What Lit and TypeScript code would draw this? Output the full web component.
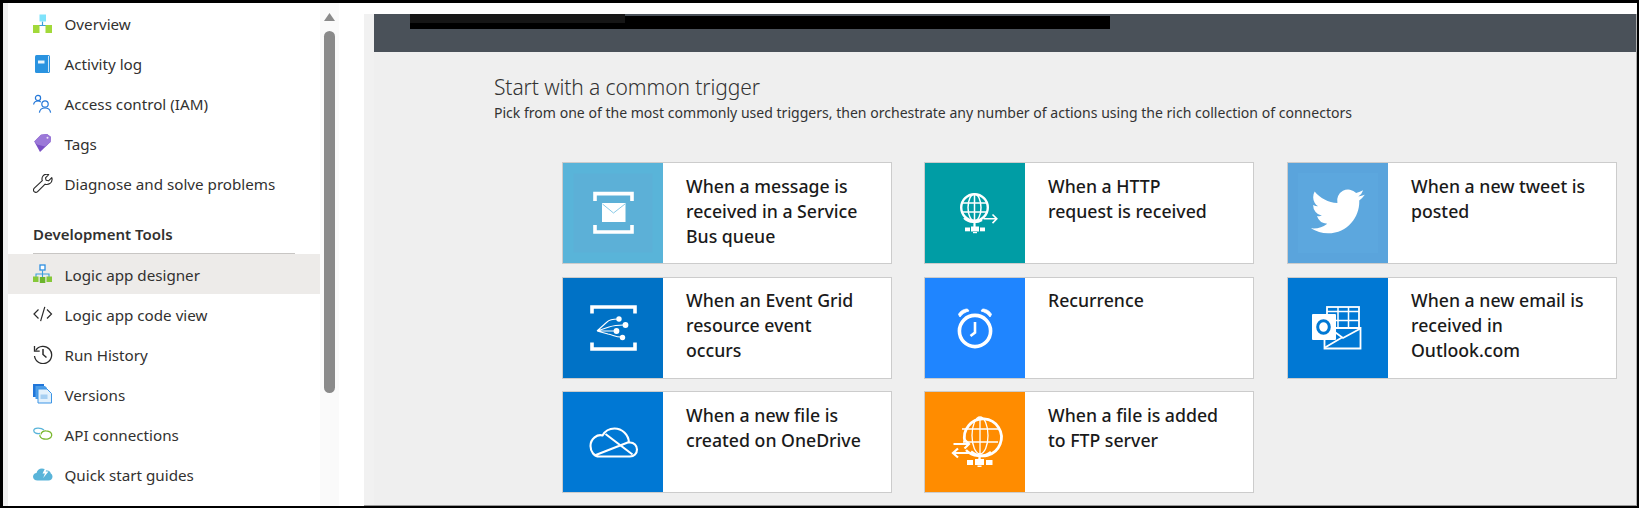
import { LitElement, html, css, svg } from "lit";
import { customElement } from "lit/decorators.js";

const navIcons: Record<string, unknown> = {
  overview: svg`<path d="M9.500 7.500v3.500M3 15v-3.500h13V15" fill="none" stroke="#3b9fdc" stroke-width="1.200"/><rect x="6.500" y="0.500" width="6.500" height="7" fill="#7fe3fb"/><rect x="0" y="11" width="6.500" height="8" fill="#a2d93a"/><rect x="12.500" y="11" width="6.500" height="8" fill="#a2d93a"/>`,
  log: svg`<rect x="2" y="1" width="15" height="18" rx="1.500" fill="#2a93e0"/><rect x="15" y="2" width="1" height="16" fill="#cfe6f8"/><rect x="5" y="6.500" width="6.500" height="3" fill="#e8f4fc"/>`,
  iam: svg`<g fill="none" stroke="#2377d8" stroke-width="1.200"><circle cx="5" cy="4" r="2.600"/><path d="M0.600 10.500C1 8 3 7 5 7c1.200 0 2 .3 2.800.9"/><circle cx="12" cy="10" r="3.200"/><path d="M6.400 18.600C6.800 15.500 9 14 12 14s5.200 1.500 5.600 4.600"/></g>`,
  tags: svg`<path d="M1.300 7.400L8 .8 14 0l4 3-.5 5L7 18z" fill="#7a4fc4"/><path d="M1.300 7.400L8 .8 14 0l4 3-.5 5-5.500 4.500L4 10.500z" fill="#9b78d8"/><circle cx="14.500" cy="3.800" r="1" fill="#eee8f8"/>`,
  wrench: svg`<path d="M18.800 3.600l-3.300 3.200-2.400-.6-.6-2.400 3.200-3.200c-2.300-.8-4.700-.1-5.900 1.700-1 1.500-1 3-.5 4.400L1.300 14.200c-1 1-1 2.500-.1 3.500.9.900 2.400.9 3.400-.1l7.500-7.400c1.500.5 3.200.4 4.700-.6 1.900-1.400 2.700-3.700 2-6z" fill="none" stroke="#2b2b2b" stroke-width="1.150" stroke-linejoin="round"/>`,
  designer: svg`<path d="M9.500 6.500v3.500M3 13v-3h13v3M9.500 10v3" fill="none" stroke="#3b9fdc" stroke-width="1.100"/><rect x="7" y="1" width="5" height="5" fill="#fff" stroke="#2d8fe0" stroke-width="1.300"/><rect x="0" y="12.500" width="5.500" height="5.500" fill="#86c83a"/><rect x="6.800" y="13" width="5.500" height="6" fill="#6cb52d"/><rect x="13.500" y="12.500" width="5.500" height="5.500" fill="#86c83a"/>`,
  code: svg`<path d="M5.500 5.500L1 10l4.500 4.500M14 5.500l4.500 4.500-4.500 4.500M11.800 2.800L7.600 17.200" fill="none" stroke="#2b2b2b" stroke-width="1.200"/>`,
  history: svg`<path d="M2.700 6.500A8.600 8.600 0 1 1 1.500 12" fill="none" stroke="#2b2b2b" stroke-width="1.300"/><path d="M1.500 2v5.200h5.200" fill="none" stroke="#2b2b2b" stroke-width="1.300"/><path d="M10 5v5.500l3.500 3" fill="none" stroke="#2b2b2b" stroke-width="1.500"/>`,
  versions: svg`<path d="M0 0h11v13H0z" fill="#2176d9"/><path d="M2.500 2H12l2 2v11H2.500z" fill="#4c9de8"/><path d="M5 5h9l4.500 4.500V19H5z" fill="#e3f1fc" stroke="#3c95e6"/><rect x="7.500" y="10.500" width="7" height="4.500" fill="#a6cff2"/>`,
  api: svg`<path d="M11 6C8 3.500 1 3.500.8 6.500.6 9 4 10 7 9.500" fill="none" stroke="#59b4d9" stroke-width="1.300"/><path d="M8 10.500C8 8 11 6.600 13 6.800c4 .2 6 2.200 5.700 4.700-.3 3-4.700 4-7.700 3.500-3-.5-4.500-2.500-4-4" fill="none" stroke="#7ab82e" stroke-width="1.300"/>`,
  quick: svg`<path d="M4.500 16.500C2 16.500 0 15 0 12.800s1.800-3.600 3.500-3.700C4 6.500 6.200 4.500 9 4.500c1.800 0 3.500.8 4.500 2 2.500-.3 4.200 1.300 4.300 3 1 .5 1.700 1.800 1.700 3.300 0 2.200-1.800 3.700-4 3.700z" fill="#59b4d9"/><path d="M13 2.500L9.500 9.500H12L10.200 14l5.300-6.500h-2.800l1.800-5z" fill="#fff"/>`,
};

const cardIcons: Record<string, unknown> = {
  bus: svg`<rect x="10.500" y="10.500" width="79" height="79" fill="#5cb0d7"/><path d="M32 38v-7.400h37V38M32 62v7h37v-7" fill="none" stroke="#fff" stroke-width="3.600"/><rect x="39" y="40" width="23.500" height="19" fill="#fff"/><path d="M39.500 41l11 9 11.500-9" fill="none" stroke="#7cc4e3" stroke-width="0.900"/>`,
  grid: svg`<path d="M29 35.500V29h43v6.500M29 64.500V71h43v-6.500" fill="none" stroke="#fff" stroke-width="3.600"/><g fill="none" stroke="#fff" stroke-width="1.100"><path d="M34 53l10-9c2-2 4-3 11-3M34 53l12-4c3-1 6-2 15-2M34 53h18M34 53l11 3c5 1 8 3 13 3"/></g><g fill="#fff"><circle cx="56" cy="41" r="2.700"/><circle cx="62.500" cy="47" r="2.900"/><circle cx="53.500" cy="53" r="2.900"/><circle cx="59.500" cy="59.500" r="2.700"/></g>`,
  onedrive: svg`<g fill="none" stroke="#fff" stroke-width="2.100" stroke-linejoin="round"><path d="M36 64.500h31c4 0 7-3 7-7 0-4-3-7-7-7h-1c-.5-8-7-14-14.500-14-5 0-9.500 2.500-12 7-5-1.500-12 3-12 10.500 0 6 4 10.500 8.500 10.500z"/><path d="M31.500 63.500L66 50M42.500 42l27 20.500"/></g>`,
  http: svg`<g fill="none" stroke="#fff"><circle cx="49.500" cy="44.500" r="13.300" stroke-width="2.400"/><ellipse cx="49.500" cy="44.500" rx="6.500" ry="13.500" stroke-width="1.500"/><path d="M36.500 40h26M36.500 49h26M49.500 31v27" stroke-width="1.500"/><path d="M39 55c5 5 13 5 18 2M49.500 60v5" stroke-width="2.200"/><path d="M58.500 55.800h13M67.500 51.500l4.300 4.300-4.300 4.300" stroke-width="1.600"/></g><g fill="#fff"><rect x="40" y="64.500" width="5" height="3.800"/><rect x="46" y="63.500" width="8" height="5"/><rect x="55" y="64.500" width="5" height="3.800"/><rect x="48" y="69" width="4" height="1.200"/></g>`,
  alarm: svg`<g fill="none" stroke="#fff"><circle cx="50" cy="53" r="15.600" stroke-width="3.600"/><path d="M50 44v10.500l-4.500 3.500" stroke-width="2.600"/></g><path d="M33.500 36.500c1-3 5-5.500 9-5.500l1.500 2c-4 1-7 3-9 6zM66.500 36.500c-1-3-5-5.500-9-5.500l-1.500 2c4 1 7 3 9 6z" fill="#fff" stroke="#fff" stroke-width="0.800"/>`,
  ftp: svg`<g fill="none" stroke="#fff"><path d="M40 50a18.500 18.500 0 1 1 6 9.500" stroke-width="2.800"/><ellipse cx="55" cy="43.500" rx="8" ry="18.500" stroke-width="1.300"/><path d="M37 37h36M38 50h35M55 25v37" stroke-width="1.300"/><path d="M41 58c6 7 18 8 25 2M54.500 64v5" stroke-width="2.400"/><path d="M28.500 52h16M39.500 47.500l4.500 4.500-4.500 4.500M44 61H28M33 56.500L28 61l5 4.500" stroke-width="2.200"/></g><g fill="#fff"><rect x="42" y="68" width="6" height="5"/><rect x="50" y="67" width="9" height="6"/><rect x="61" y="68" width="6.500" height="5"/><rect x="52.500" y="73.500" width="4" height="1.500"/></g>`,
  twitter: svg`<rect x="10" y="10" width="80" height="80" fill="#5ca7de"/><path transform="translate(23 21.500) scale(2.240)" d="M23.953 4.570a10 10 0 0 1-2.825.775 4.958 4.958 0 0 0 2.163-2.723c-.951.555-2.005.959-3.127 1.184a4.920 4.920 0 0 0-8.384 4.482C7.690 8.095 4.067 6.130 1.640 3.162a4.822 4.822 0 0 0-.666 2.475c0 1.710.870 3.213 2.188 4.096a4.904 4.904 0 0 1-2.228-.616v.060a4.923 4.923 0 0 0 3.946 4.827 4.996 4.996 0 0 1-2.212.085 4.936 4.936 0 0 0 4.604 3.417 9.867 9.867 0 0 1-6.102 2.105c-.390 0-.779-.023-1.170-.067a13.995 13.995 0 0 0 7.557 2.209c9.053 0 13.998-7.496 13.998-13.985 0-.210 0-.420-.015-.630A9.935 9.935 0 0 0 24 4.590z" fill="#fff"/>`,
  outlook: svg`<g fill="none" stroke="#fff"><rect x="39" y="29" width="32" height="23" stroke-width="1.800"/><path d="M39 33.500h32M50 29v23M60.500 29v23M39 42.500h32" stroke-width="1.500"/></g><path d="M36.500 50h36v20.500h-36z" fill="#0078d4" stroke="#fff" stroke-width="1.800"/><path d="M37 69.500l17-10M72.500 50.500L55 60 44 52" fill="none" stroke="#fff" stroke-width="1.800"/><rect x="24" y="36" width="24" height="26" rx="1" fill="#fff"/><ellipse cx="35.500" cy="49" rx="5.800" ry="6.300" fill="none" stroke="#0078d4" stroke-width="3"/>`,
};

const navTop = [
  ["overview", "Overview"],
  ["log", "Activity log"],
  ["iam", "Access control (IAM)"],
  ["tags", "Tags"],
  ["wrench", "Diagnose and solve problems"],
];
const navDev = [
  ["designer", "Logic app designer", true],
  ["code", "Logic app code view"],
  ["history", "Run History"],
  ["versions", "Versions"],
  ["api", "API connections"],
  ["quick", "Quick start guides"],
];
const cards = [
  ["bus", "#59b4d9", "When a message is received in a Service Bus queue"],
  ["http", "#009da5", "When a HTTP request is received"],
  ["twitter", "#5aa4dc", "When a new tweet is posted"],
  ["grid", "#0072c6", "When an Event Grid resource event occurs"],
  ["alarm", "#1f85ff", "Recurrence"],
  ["outlook", "#0078d4", "When a new email is received in Outlook.com"],
  ["onedrive", "#0078d4", "When a new file is created on OneDrive"],
  ["ftp", "#ff8c00", "When a file is added to FTP server"],
];

@customElement("app-root")
export class AppRoot extends LitElement {
  static styles = css`
    :host { display: block; width: 1639px; height: 508px; overflow: hidden; }
    .frame {
      box-sizing: border-box; width: 1639px; height: 508px; background: #fff;
      border: solid #000; border-width: 3px 2px 2px 3px; display: flex;
      font-family: "Noto Sans", sans-serif;
    }
    .sliver { width: 5px; background: #f0f0f0; flex: none; }
    .side { width: 312px; flex: none; padding-top: 1px; overflow: hidden; }
    .row {
      height: 40px; display: flex; align-items: center; gap: 11.500px; padding-left: 25px;
      font-size: 15.200px; color: #323130; box-sizing: border-box;
    }
    .row.sel { background: #edebe9; }
    .dev span { padding-top: 2px; }
    .row svg { width: 20px; height: 20px; flex: none; }
    .group {
      height: 50px; box-sizing: border-box; margin: 0 25px; padding-top: 20px;
      font-size: 15px; font-weight: 600; color: #323130; border-bottom: 1px solid #c8c6c4;
    }
    .track {
      width: 19px; flex: none; background: #fafafa; box-sizing: border-box;
      padding: 10px 4px 0; display: flex; flex-direction: column; gap: 10px;
    }
    .arrow { width: 11px; height: 8px; background: #8a8a8a; clip-path: polygon(50% 0, 100% 100%, 0 100%); }
    .thumb { width: 11px; height: 362px; background: #8a8a8a; border-radius: 6px; }
    .gutter { width: 25px; flex: none; }
    .main { flex: 1; margin-top: 11px; border-bottom: 1px solid #9a9a9a; border-right: 1px solid #b0b0b0; display: flex; background: #efefef; min-width: 0; }
    .pad { width: 10px; background: #f1f1f1; flex: none; }
    .content { flex: 1; min-width: 0; }
    .head { height: 38px; background: #4a5159; display: flex; flex-direction: column; padding-left: 36px; }
    .redact { position: relative; width: 700px; height: 13px; margin-top: 2px; background: #000; }
    .redact::before { content: ""; position: absolute; left: 0; top: -2px; width: 215px; height: 9px; background: #161616; }
    .intro { padding: 20px 0 0 120px; height: 110px; box-sizing: border-box; color: #333; }
    h1 { margin: 0; font-size: 21px; font-weight: 300; line-height: 31px; letter-spacing: -0.100px; }
    p { margin: 0; font-size: 14.060px; line-height: 19px; }
    .grid { display: grid; grid-template-columns: 330px 331px 330px; column-gap: 32px; row-gap: 12.600px; margin-left: 188px; justify-items: start; }
    .card {
      box-sizing: border-box; width: 330px; height: 102px; background: #fff; border: 1px solid #ccc; display: flex;
    }
    .ico { width: 100px; height: 100px; flex: none; display: block; }
    .txt { padding: 10.500px 0 0 23px; width: 178px; font-size: 17.700px; font-weight: 500; line-height: 25px; color: #1a1a1a; }
  `;

  private navRow(r: unknown[], cls = "") {
    return html`<div class="row ${cls} ${r[2] ? "sel" : ""}"><svg viewBox="0 0 20 20">${navIcons[r[0] as string]}</svg><span>${r[1]}</span></div>`;
  }

  render() {
    return html`<div class="frame">
      <div class="sliver"></div>
      <nav class="side">
        ${navTop.map((r) => this.navRow(r))}
        <div class="group">Development Tools</div>
        ${navDev.map((r) => this.navRow(r, "dev"))}
      </nav>
      <div class="track"><div class="arrow"></div><div class="thumb"></div></div>
      <div class="gutter"></div>
      <main class="main">
        <div class="pad"></div>
        <div class="content">
          <div class="head"><div class="redact"></div></div>
          <div class="intro">
            <h1>Start with a common trigger</h1>
            <p>Pick from one of the most commonly used triggers, then orchestrate any number of actions using the rich collection of connectors</p>
          </div>
          <div class="grid">
            ${cards.map(
              (c) => html`<div class="card">
                <svg class="ico" viewBox="0 0 100 100"><rect width="100" height="100" fill="${c[1]}"/>${cardIcons[c[0]]}</svg>
                <div class="txt">${c[2]}</div>
              </div>`
            )}
          </div>
        </div>
      </main>
    </div>`;
  }
}
